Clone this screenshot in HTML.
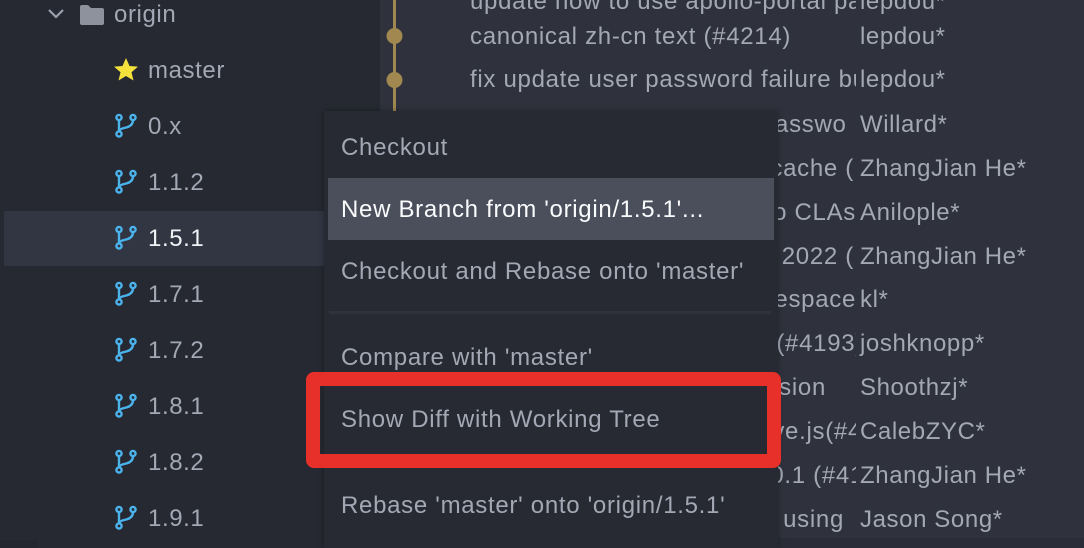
<!DOCTYPE html>
<html><head><meta charset="utf-8"><style>
*{margin:0;padding:0;box-sizing:border-box}
body{width:1084px;height:548px;overflow:hidden;background:#2f323d;font-family:"Liberation Sans",sans-serif;position:relative}
#left{position:absolute;left:0;top:0;width:380px;height:548px;background:#262932}
.t{position:absolute;font-size:24px;letter-spacing:0.6px;color:#a3a8b4;line-height:28px;white-space:nowrap}
.sel{position:absolute;left:4px;top:211px;width:376px;height:55px;background:#323643}
.ic{position:absolute}
.msg{position:absolute;left:470px;width:386px;height:28px;overflow:hidden;font-size:24px;letter-spacing:0.7px;color:#a3a8b4;line-height:28px;white-space:nowrap}
.r{position:absolute;top:0;font-size:24px;letter-spacing:0.7px;color:#a3a8b4;line-height:28px;white-space:nowrap;overflow:hidden;text-align:right;width:380px;direction:rtl}
.au{position:absolute;left:860px;font-size:24px;letter-spacing:0.6px;color:#a3a8b4;line-height:28px;white-space:nowrap}
#menu{position:absolute;left:324px;top:111px;width:454px;height:437px;background:#272a33;box-shadow:0 0 6px rgba(0,0,0,.35)}
.mi{position:absolute;left:17px;font-size:24px;letter-spacing:0.7px;color:#a3a8b4;line-height:28px;white-space:nowrap}
</style></head><body>
<div id="left">
<div class="sel"></div>
<svg class="ic" style="left:46px;top:6px" width="20" height="16"><path d="M3 4l7 7 7-7" stroke="#9aa0ac" stroke-width="2.2" fill="none"/></svg>
<svg class="ic" style="left:78px;top:3px" width="28" height="24"><path d="M2 4q0-2 2-2h6l3 3h11q2 0 2 2v13q0 2-2 2H4q-2 0-2-2z" fill="#8e929d"/></svg>
<div class="t" style="left:114px;top:1px">origin</div>
<svg class="ic" style="left:112px;top:57px" width="28" height="26"><path d="M14 1l3.5 8 8.5.6-6.5 5.6 2 8.3L14 19l-7.5 4.5 2-8.3L2 9.6l8.5-.6z" fill="#f5e13c"/></svg>
<div class="t" style="left:148px;top:57px">master</div>
<div class="t" style="left:148px;top:113px">0.x</div>
<div class="t" style="left:148px;top:169px">1.1.2</div>
<div class="t" style="left:148px;top:225px;color:#f0f2f5">1.5.1</div>
<div class="t" style="left:148px;top:281px">1.7.1</div>
<div class="t" style="left:148px;top:337px">1.7.2</div>
<div class="t" style="left:148px;top:393px">1.8.1</div>
<div class="t" style="left:148px;top:449px">1.8.2</div>
<div class="t" style="left:148px;top:505px">1.9.1</div>
<div style="position:absolute;left:0;top:540px;width:38px;height:8px;background:#23262e"></div>
</div>
<svg style="position:absolute;left:0;top:0" width="380" height="548">
<defs><g id="br" fill="none" stroke="#4ab3ec" stroke-width="2.4"><circle cx="4" cy="3.5" r="2.6"/><circle cx="18" cy="3.5" r="2.6"/><circle cx="4" cy="20" r="2.6"/><path d="M4 6v11.4M18 6q0 6-7 7.5T4 17"/></g></defs>
<use href="#br" x="115" y="114"/><use href="#br" x="115" y="170"/><use href="#br" x="115" y="226"/><use href="#br" x="115" y="282"/><use href="#br" x="115" y="338"/><use href="#br" x="115" y="394"/><use href="#br" x="115" y="450"/><use href="#br" x="115" y="506"/>
</svg>
<svg style="position:absolute;left:380px;top:0" width="30" height="548"><path d="M14.5 0v548" stroke="#a08850" stroke-width="3"/><circle cx="14.5" cy="36" r="8" fill="#a08850"/><circle cx="14.5" cy="80" r="8" fill="#a08850"/></svg>
<div class="msg" style="top:-12px">update how to use apollo-portal pages</div><div class="au" style="top:-12px">lepdou*</div>
<div class="msg" style="top:23px">canonical zh-cn text (#4214)</div><div class="au" style="top:23px">lepdou*</div>
<div class="msg" style="top:66px">fix update user password failure bug</div><div class="au" style="top:66px">lepdou*</div>
<div class="msg" style="top:111px">fix update user password passwo</div><div class="au" style="top:111px">Willard*</div>
<div class="msg" style="top:155px"><span class="r" style="right:2px">&#x202A;remove config service cache (&#x202C;</span></div><div class="au" style="top:155px">ZhangJian He*</div>
<div class="msg" style="top:199px"><span class="r" style="right:0px">&#x202A;add Anilople to CLAs&#x202C;</span></div><div class="au" style="top:199px">Anilople*</div>
<div class="msg" style="top:243px"><span class="r" style="right:2px">&#x202A;update copyright 2022 (&#x202C;</span></div><div class="au" style="top:243px">ZhangJian He*</div>
<div class="msg" style="top:286px"><span class="r" style="right:0px">&#x202A;remove trailing whitespace&#x202C;</span></div><div class="au" style="top:286px">kl*</div>
<div class="msg" style="top:330px"><span class="r" style="right:-8px">&#x202A;fix docs links (#4193)&#x202C;</span></div><div class="au" style="top:330px">joshknopp*</div>
<div class="msg" style="top:374px"><span class="r" style="right:30px">&#x202A;bump version&#x202C;</span></div><div class="au" style="top:374px">Shoothzj*</div>
<div class="msg" style="top:418px"><span class="r" style="right:-6px">&#x202A;update directive.js(#4&#x202C;</span></div><div class="au" style="top:418px">CalebZYC*</div>
<div class="msg" style="top:462px"><span class="r" style="right:-8px">&#x202A;upgrade to 2.0.1 (#41&#x202C;</span></div><div class="au" style="top:462px">ZhangJian He*</div>
<div class="msg" style="top:506px"><span class="r" style="right:12px">&#x202A;use jdk 11 using&#x202C;</span></div><div class="au" style="top:506px">Jason Song*</div>
<div style="position:absolute;left:380px;top:538px;width:704px;height:10px;background:#2a2d37"></div>
<div id="menu">
<div class="mi" style="top:23px">Checkout</div>
<div style="position:absolute;left:4px;top:67px;width:446px;height:62px;background:#4b4f5b"></div>
<div class="mi" style="top:85px;color:#fafbfc">New Branch from 'origin/1.5.1'...</div>
<div class="mi" style="top:147px">Checkout and Rebase onto 'master'</div>
<div style="position:absolute;left:5px;top:200px;width:442px;height:3px;background:#2f323c"></div>
<div class="mi" style="top:233px">Compare with 'master'</div>
<div class="mi" style="top:295px">Show Diff with Working Tree</div>
<div class="mi" style="top:381px">Rebase 'master' onto 'origin/1.5.1'</div>
</div>
<div style="position:absolute;left:306px;top:372px;width:475px;height:96px;border:14px solid #e8302a;border-radius:8px"></div>
</body></html>
